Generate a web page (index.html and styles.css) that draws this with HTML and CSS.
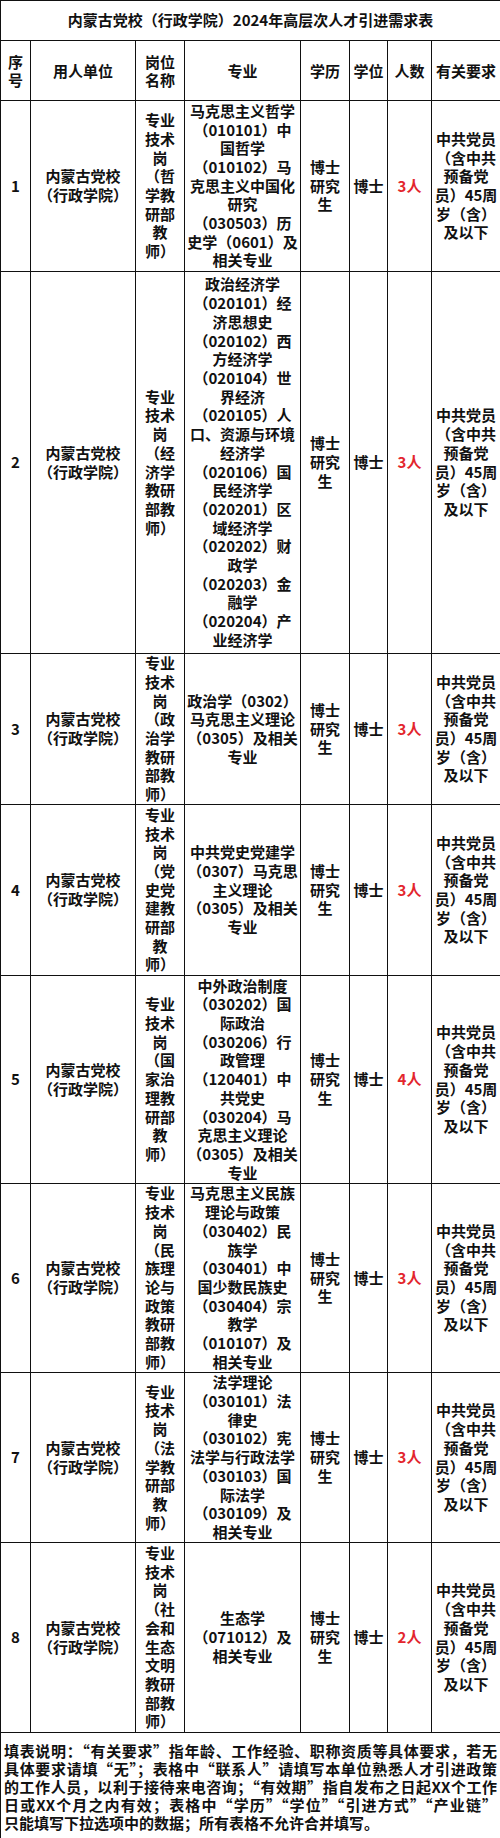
FILE: index.html
```html
<!DOCTYPE html>
<html lang="zh-CN">
<head>
<meta charset="utf-8">
<title>内蒙古党校（行政学院）2024年高层次人才引进需求表</title>
<link rel="stylesheet" href="styles.css">
</head>
<body>
<table class="sheet">
  <colgroup>
    <col class="c-no">
    <col class="c-unit">
    <col class="c-post">
    <col class="c-major">
    <col class="c-edu">
    <col class="c-deg">
    <col class="c-num">
    <col class="c-req">
  </colgroup>
  <tr class="title"><th colspan="8">内蒙古党校（行政学院）2024年高层次人才引进需求表</th></tr>
  <tr class="head">
    <th>序<br>号</th><th>用人单位</th><th>岗位<br>名称</th><th>专业</th><th>学历</th><th>学位</th><th>人数</th><th>有关要求</th>
  </tr>
  <tr class="r1">
    <td>1</td>
    <td>内蒙古党校<br>（行政学院）</td>
    <td>专业<br>技术<br>岗<br>（哲<br>学教<br>研部<br>教<br>师）</td>
    <td>马克思主义哲学<br>（010101）中<br>国哲学<br>（010102）马<br>克思主义中国化<br>研究<br>（030503）历<br>史学（0601）及<br>相关专业</td>
    <td>博士<br>研究<br>生</td>
    <td>博士</td>
    <td class="num">3人</td>
    <td>中共党员<br>（含中共<br>预备党<br>员）45周<br>岁（含）<br>及以下</td>
  </tr>
  <tr class="r2">
    <td>2</td>
    <td>内蒙古党校<br>（行政学院）</td>
    <td>专业<br>技术<br>岗<br>（经<br>济学<br>教研<br>部教<br>师）</td>
    <td>政治经济学<br>（020101）经<br>济思想史<br>（020102）西<br>方经济学<br>（020104）世<br>界经济<br>（020105）人<br>口、资源与环境<br>经济学<br>（020106）国<br>民经济学<br>（020201）区<br>域经济学<br>（020202）财<br>政学<br>（020203）金<br>融学<br>（020204）产<br>业经济学</td>
    <td>博士<br>研究<br>生</td>
    <td>博士</td>
    <td class="num">3人</td>
    <td>中共党员<br>（含中共<br>预备党<br>员）45周<br>岁（含）<br>及以下</td>
  </tr>
  <tr class="r3">
    <td>3</td>
    <td>内蒙古党校<br>（行政学院）</td>
    <td>专业<br>技术<br>岗<br>（政<br>治学<br>教研<br>部教<br>师）</td>
    <td>政治学（0302）<br>马克思主义理论<br>（0305）及相关<br>专业</td>
    <td>博士<br>研究<br>生</td>
    <td>博士</td>
    <td class="num">3人</td>
    <td>中共党员<br>（含中共<br>预备党<br>员）45周<br>岁（含）<br>及以下</td>
  </tr>
  <tr class="r4">
    <td>4</td>
    <td>内蒙古党校<br>（行政学院）</td>
    <td>专业<br>技术<br>岗<br>（党<br>史党<br>建教<br>研部<br>教<br>师）</td>
    <td>中共党史党建学<br>（0307）马克思<br>主义理论<br>（0305）及相关<br>专业</td>
    <td>博士<br>研究<br>生</td>
    <td>博士</td>
    <td class="num">3人</td>
    <td>中共党员<br>（含中共<br>预备党<br>员）45周<br>岁（含）<br>及以下</td>
  </tr>
  <tr class="r5">
    <td>5</td>
    <td>内蒙古党校<br>（行政学院）</td>
    <td>专业<br>技术<br>岗<br>（国<br>家治<br>理教<br>研部<br>教<br>师）</td>
    <td>中外政治制度<br>（030202）国<br>际政治<br>（030206）行<br>政管理<br>（120401）中<br>共党史<br>（030204）马<br>克思主义理论<br>（0305）及相关<br>专业</td>
    <td>博士<br>研究<br>生</td>
    <td>博士</td>
    <td class="num">4人</td>
    <td>中共党员<br>（含中共<br>预备党<br>员）45周<br>岁（含）<br>及以下</td>
  </tr>
  <tr class="r6">
    <td>6</td>
    <td>内蒙古党校<br>（行政学院）</td>
    <td>专业<br>技术<br>岗<br>（民<br>族理<br>论与<br>政策<br>教研<br>部教<br>师）</td>
    <td>马克思主义民族<br>理论与政策<br>（030402）民<br>族学<br>（030401）中<br>国少数民族史<br>（030404）宗<br>教学<br>（010107）及<br>相关专业</td>
    <td>博士<br>研究<br>生</td>
    <td>博士</td>
    <td class="num">3人</td>
    <td>中共党员<br>（含中共<br>预备党<br>员）45周<br>岁（含）<br>及以下</td>
  </tr>
  <tr class="r7">
    <td>7</td>
    <td>内蒙古党校<br>（行政学院）</td>
    <td>专业<br>技术<br>岗<br>（法<br>学教<br>研部<br>教<br>师）</td>
    <td>法学理论<br>（030101）法<br>律史<br>（030102）宪<br>法学与行政法学<br>（030103）国<br>际法学<br>（030109）及<br>相关专业</td>
    <td>博士<br>研究<br>生</td>
    <td>博士</td>
    <td class="num">3人</td>
    <td>中共党员<br>（含中共<br>预备党<br>员）45周<br>岁（含）<br>及以下</td>
  </tr>
  <tr class="r8">
    <td>8</td>
    <td>内蒙古党校<br>（行政学院）</td>
    <td>专业<br>技术<br>岗<br>（社<br>会和<br>生态<br>文明<br>教研<br>部教<br>师）</td>
    <td>生态学<br>（071012）及<br>相关专业</td>
    <td>博士<br>研究<br>生</td>
    <td>博士</td>
    <td class="num">2人</td>
    <td>中共党员<br>（含中共<br>预备党<br>员）45周<br>岁（含）<br>及以下</td>
  </tr>
  <tr class="note">
    <td colspan="8">
      <span class="ln">填表说明：“有关要求”指年龄、工作经验、职称资质等具体要求，若无</span>
      <span class="ln">具体要求请填“无”；表格中“联系人”请填写本单位熟悉人才引进政策</span>
      <span class="ln">的工作人员，以利于接待来电咨询；“有效期”指自发布之日起XX个工作</span>
      <span class="ln">日或XX个月之内有效；表格中“学历”“学位”“引进方式”“产业链”</span>
      <span class="ln end">只能填写下拉选项中的数据；所有表格不允许合并填写。</span>
    </td>
  </tr>
</table>
</body>
</html>
```
FILE: styles.css
```css
* { box-sizing: border-box; }

html, body {
  margin: 0;
  padding: 0;
  background: #ffffff;
}

body {
  font-family: "Noto Sans CJK SC", "Noto Sans", sans-serif;
  color: #111111;
}

.sheet {
  width: 500px;
  border-collapse: collapse;
  table-layout: fixed;
  font-size: 15px;
  line-height: 18.7px;
  font-weight: 700;
}

.sheet th,
.sheet td {
  border: 1px solid #111111;
  padding: 0 2px;
  text-align: center;
  vertical-align: middle;
  overflow: hidden;
  font-weight: 700;
}

.c-no { width: 30px; }
.c-unit { width: 105px; }
.c-post { width: 49px; }
.c-major { width: 116px; }
.c-edu { width: 49px; }
.c-deg { width: 38px; }
.c-num { width: 44px; }
.c-req { width: 69px; }

.title { height: 40px; }
.head { height: 60px; }
.r1 { height: 171px; }
.r2 { height: 382px; }
.r3 { height: 151px; }
.r4 { height: 171px; }
.r5 { height: 208px; }
.r6 { height: 189px; }
.r7 { height: 170px; }
.r8 { height: 190px; }

.head th { line-height: 18px; }

.num {
  color: #e3262d;
}

.note { height: 106px; }

.note td {
  text-align: left;
  vertical-align: top;
  padding: 9px 3px 0 3px;
  line-height: 18px;
}

.ln {
  display: block;
  text-align: justify;
  text-align-last: justify;
}

.ln.end {
  text-align-last: left;
}
```
